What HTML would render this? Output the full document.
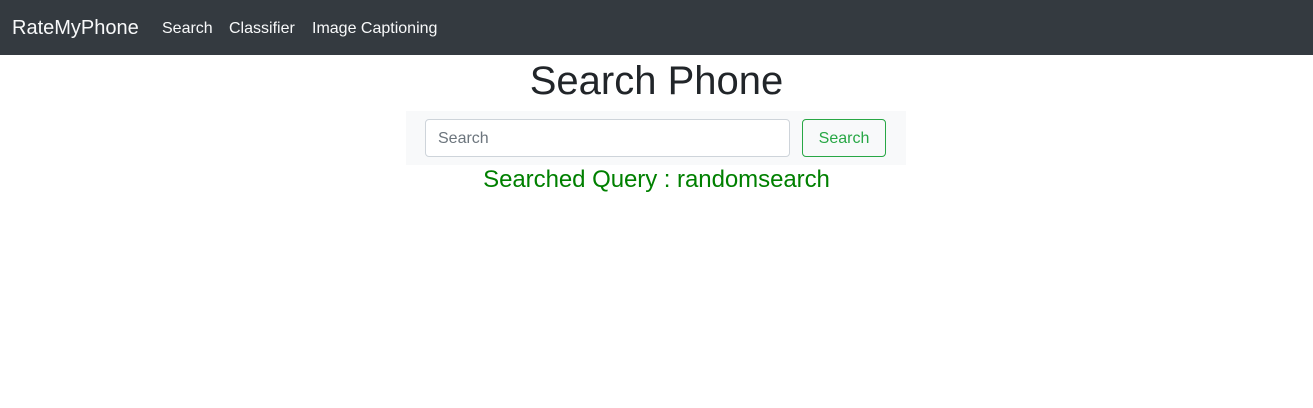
<!DOCTYPE html>
<html><head><style>
body{margin:0;font-family:"Liberation Sans",sans-serif;background:#fff;color:#212529}
.nav{height:55px;background:#343a40;position:relative}
.nav span{position:absolute;top:1px;line-height:55px;color:#f8f9fa;font-size:16px}
.brand{font-size:20px!important}
h1{margin:0;position:absolute;top:57px;left:0;width:1313px;text-align:center;font-size:40px;font-weight:400;line-height:48px}
.box{position:absolute;left:406px;top:111px;width:500px;height:54px;background:#f8f9fa}
.inp{position:absolute;left:425px;top:119px;width:363px;height:36px;border:1px solid #ced4da;border-radius:4px;background:#fff;box-sizing:content-box}
.inp span{position:absolute;left:12px;top:1px;line-height:36px;color:#6c757d;font-size:16px}
.btn{position:absolute;left:802px;top:119px;width:82px;height:36px;border:1px solid #28a745;border-radius:4px;color:#28a745;font-size:16px;line-height:38px;text-align:center}
.q{position:absolute;top:167px;left:0;width:1313px;text-align:center;color:green;font-size:24px;line-height:26px;letter-spacing:-0.05px}
</style></head><body>
<div class="nav"><span class="brand" style="left:12px">RateMyPhone</span><span style="left:162px">Search</span><span style="left:229px">Classifier</span><span style="left:312px">Image Captioning</span></div>
<h1>Search Phone</h1>
<div class="box"></div>
<div class="inp"><span>Search</span></div>
<div class="btn">Search</div>
<div class="q">Searched Query : randomsearch</div>
</body></html>
